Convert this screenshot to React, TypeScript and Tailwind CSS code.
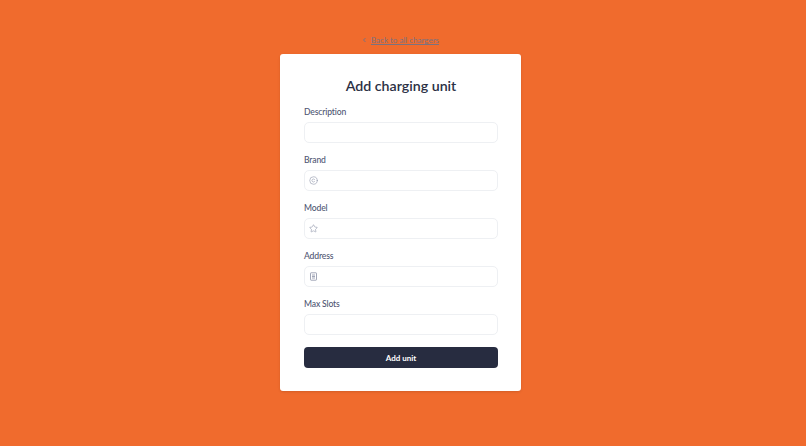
import { Copyright, Star } from 'lucide-react';
import type { ReactNode } from 'react';

function Field({ label, icon }: { label: string; icon?: ReactNode }) {
  return (
    <div className="flex flex-col">
      <label className="text-[8.6px] leading-[12px] font-medium tracking-[-0.15px] text-[#4f5672]">{label}</label>
      <div className="mt-[4px] flex h-[21px] items-center rounded-[5px] border border-[#eef0f3] bg-white pl-[4px]">
        {icon}
      </div>
    </div>
  );
}

export default function App() {
  return (
    <div
      className="flex h-[446px] w-[806px] flex-col items-center overflow-hidden bg-[#f06b2d] pt-[34px] pr-[5px]"
      style={{ fontFamily: 'Lato, "Noto Sans", sans-serif' }}
    >
      <a className="flex h-[12px] items-center gap-[4px] text-[8px] leading-[12px] text-[#7a7280]">
        <svg width="5" height="6" viewBox="0 0 5 6" className="shrink-0" fill="none" stroke="currentColor" strokeWidth="1">
          <path d="M3.5 1 L1.5 3 L3.5 5" />
        </svg>
        <span className="underline">Back to all chargers</span>
      </a>
      <div className="mt-[8px] flex h-[337px] w-[241px] flex-col rounded-[3px] bg-white pt-[22px] pr-[23px] pl-[24px] shadow-sm">
        <h1 className="text-center text-[14.2px] leading-[19px] font-semibold text-[#2b3044]">Add charging unit</h1>
        <div className="mt-[11px] flex flex-col gap-[11px]">
          <Field label="Description" />
          <Field label="Brand" icon={<Copyright size={9} strokeWidth={1.5} className="text-[#8a91a6]" />} />
          <Field label="Model" icon={<Star size={9} strokeWidth={1.5} className="text-[#8a91a6]" />} />
          <Field
            label="Address"
            icon={
              <svg width="9" height="9" viewBox="0 0 9 9" fill="none" stroke="#8a91a6" strokeWidth="0.8">
                <rect x="1.5" y="0.8" width="6" height="7.4" rx="0.6" />
                <path d="M3 3h3M3 4.5h3M3 6h3" />
              </svg>
            }
          />
          <Field label="Max Slots" />
        </div>
        <button
          type="button"
          className="mt-[12px] h-[21px] w-full rounded-[4px] bg-[#272c40] text-[8px] font-bold text-white"
        >
          Add unit
        </button>
      </div>
    </div>
  );
}
